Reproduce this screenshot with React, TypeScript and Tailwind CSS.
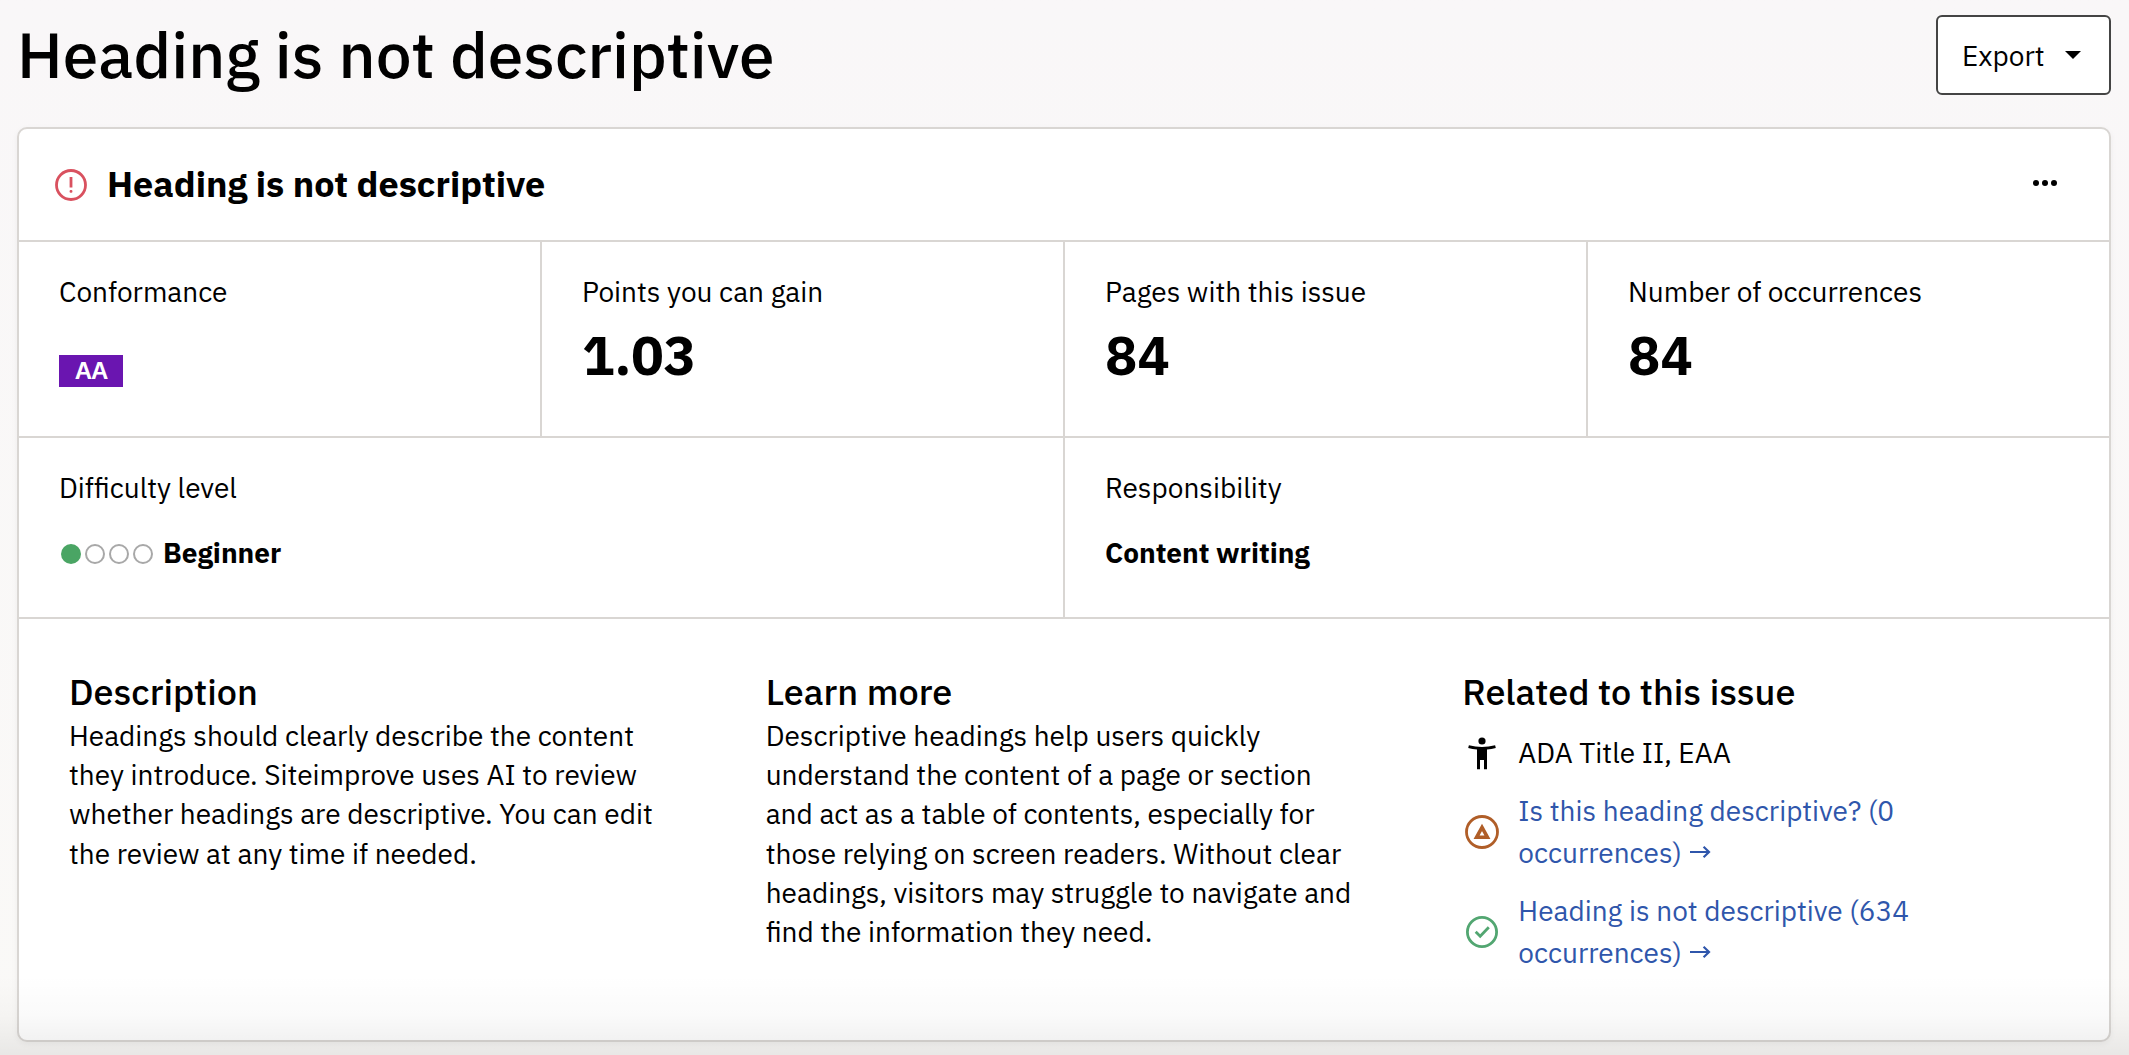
import { ReactNode } from 'react';

interface Stat {
  label: string;
  value: ReactNode;
}

const AlertCircle = () => (
  <svg width="32" height="32" viewBox="0 0 32 32" fill="none">
    <circle cx="16" cy="16" r="14.5" stroke="#d9515f" strokeWidth="2.8" />
    <rect x="14.6" y="8" width="2.8" height="10.5" fill="#d9515f" />
    <rect x="14.6" y="21" width="2.8" height="2.8" rx="1" fill="#d9515f" />
  </svg>
);

const Accessibility = () => (
  <svg width="36" height="36" viewBox="0 0 36 36" fill="#000">
    <circle cx="18" cy="6" r="3.6" />
    <path d="M4.9 10.2 Q18 13.6 31.1 10.2 L31.8 13 Q27.5 14.2 23 14.6 V34.2 H20 V25 H16 V34.2 H13 V14.6 Q8.5 14.2 4.2 13 Z" />
  </svg>
);

const WarningCircle = () => (
  <svg width="34" height="34" viewBox="0 0 34 34" fill="none" stroke="#b05e28">
    <circle cx="17" cy="17" r="15.5" strokeWidth="2.8" />
    <path d="M17 12.4 L22.4 22.2 H11.6 Z" strokeWidth="3.6" />
  </svg>
);

const CheckCircle = () => (
  <svg width="32" height="32" viewBox="0 0 32 32" fill="none" stroke="#52a671">
    <circle cx="16" cy="16" r="14.6" strokeWidth="2.8" />
    <path d="M9.7 15.8 L14.2 20.2 L22.8 11.2" strokeWidth="2.8" />
  </svg>
);

const stats: Stat[] = [
  {
    label: 'Conformance',
    value: (
      <span className="mt-[43px] flex h-8 w-16 items-center justify-center bg-[#6a15b0] font-['Liberation_Sans',sans-serif] text-2xl leading-8 font-bold tracking-[-1px] text-white">
        AA
      </span>
    ),
  },
  { label: 'Points you can gain', value: <BigNumber value="1.03" /> },
  { label: 'Pages with this issue', value: <BigNumber value="84" /> },
  { label: 'Number of occurrences', value: <BigNumber value="84" /> },
];

const related = [
  {
    icon: <WarningCircle />,
    label: 'Is this heading descriptive?',
    count: 0,
  },
  {
    icon: <CheckCircle />,
    label: 'Heading is not descriptive',
    count: 634,
  },
];

function BigNumber({ value }: { value: string }) {
  return (
    <span className="mt-[13px] block text-[54px] leading-[60px] font-bold">
      {value}
    </span>
  );
}

const Difficulty = ({ level, label }: { level: number; label: string }) => (
  <div className="flex items-center">
    <div className="flex gap-1 pl-0.5 pt-0.5">
      {[1, 2, 3, 4].map((step) => (
        <span
          key={step}
          className={
            step <= level
              ? 'size-5 rounded-full bg-[#4aa564]'
              : 'size-5 rounded-full border-2 border-[#a8a8a8]'
          }
        />
      ))}
    </div>
    <span className="ml-2.5 font-bold">{label}</span>
  </div>
);

const Column = ({ title, children }: { title: string; children: ReactNode }) => (
  <section className="flex-1 pl-[50px] pr-[51px]">
    <h3 className="text-[36px] leading-[50.4px] font-medium">{title}</h3>
    {children}
  </section>
);

export default function App() {
  return (
    <div className="relative h-[1055px] overflow-hidden bg-gradient-to-b from-[#f9f7f8] to-[#faf9f7] pl-[17px] pr-[18px] pt-[15px] font-['IBM_Plex_Sans',Roboto,sans-serif] text-[28px] leading-10 text-black">
      <header className="flex h-20 items-center justify-between">
        <h1 className="pb-0.5 text-[64px] leading-[64px] font-medium">
          Heading is not descriptive
        </h1>
        <button className="flex h-20 w-[175px] items-center rounded-md border-2 border-[#444] bg-white pl-6">
          <span className="pt-0.5">Export</span>
          <svg className="ml-5" width="16" height="8" viewBox="0 0 16 8">
            <path d="M0 0H16L8 8Z" fill="#000" />
          </svg>
        </button>
      </header>

      <main className="mt-8 flex h-[915px] flex-col rounded-[10px] border-2 border-[#d9d6d3] bg-white shadow-[0_2px_6px_rgba(0,0,0,0.05)]">
        <div className="flex h-[113px] items-center justify-between border-b-2 border-[#d9d6d3] pl-9 pr-[52px]">
          <div className="flex items-center gap-5">
            <AlertCircle />
            <h2 className="pb-0.5 text-[36px] leading-[50px] font-bold">
              Heading is not descriptive
            </h2>
          </div>
          <svg className="mb-[3px]" width="24" height="6" viewBox="0 0 24 6">
            <circle cx="3" cy="3" r="3" />
            <circle cx="12" cy="3" r="3" />
            <circle cx="21" cy="3" r="3" />
          </svg>
        </div>

        <div className="flex h-[196px] border-b-2 border-[#d9d6d3]">
          {stats.map((stat) => (
            <div
              key={stat.label}
              className="flex-1 border-r-2 border-[#d9d6d3] pl-10 pt-[30px] last:border-r-0"
            >
              <p>{stat.label}</p>
              {stat.value}
            </div>
          ))}
        </div>

        <div className="flex h-[181px] border-b-2 border-[#d9d6d3]">
          <div className="flex-1 border-r-2 border-[#d9d6d3] pl-10 pt-[30px]">
            <p className="mb-[25px]">Difficulty level</p>
            <Difficulty level={1} label="Beginner" />
          </div>
          <div className="flex-1 pl-10 pt-[30px]">
            <p className="mb-[25px]">Responsibility</p>
            <p className="font-bold">Content writing</p>
          </div>
        </div>

        <div className="flex pt-12">
          <Column title="Description">
            <p className="-mt-[1.5px] leading-[39.2px]">
              Headings should clearly describe the content they introduce.
              Siteimprove uses AI to review whether headings are descriptive.
              You can edit the review at any time if needed.
            </p>
          </Column>
          <Column title="Learn more">
            <p className="-mt-[1.5px] leading-[39.2px]">
              Descriptive headings help users quickly understand the content of
              a page or section and act as a table of contents, especially for
              those relying on screen readers. Without clear headings, visitors
              may struggle to navigate and find the information they need.
            </p>
          </Column>
          <Column title="Related to this issue">
            <ul className="mt-[15px] flex flex-col gap-4 pr-8 leading-[42px]">
              <li className="flex items-center gap-4">
                <span className="flex w-10 justify-center">
                  <Accessibility />
                </span>
                ADA Title II, EAA
              </li>
              {related.map((item) => (
                <li key={item.label} className="flex items-center gap-4">
                  <span className="flex w-10 shrink-0 justify-center">
                    {item.icon}
                  </span>
                  <a href="#" className="text-[#2f56ab]">
                    {item.label} ({item.count} occurrences)
                    <svg
                      className="ml-2 inline-block align-[5px]"
                      width="21"
                      height="12"
                      viewBox="0 0 21 12"
                      fill="none"
                      stroke="currentColor"
                      strokeWidth="2.2"
                    >
                      <path d="M0 6H19M13.6 0.8L19 6L13.6 11.2" />
                    </svg>
                  </a>
                </li>
              ))}
            </ul>
          </Column>
        </div>
      </main>

      {/* Bottom fade */}
      <div className="pointer-events-none absolute inset-x-0 bottom-0 h-20 bg-gradient-to-b from-transparent via-black/2 to-black/7" />
    </div>
  );
}
